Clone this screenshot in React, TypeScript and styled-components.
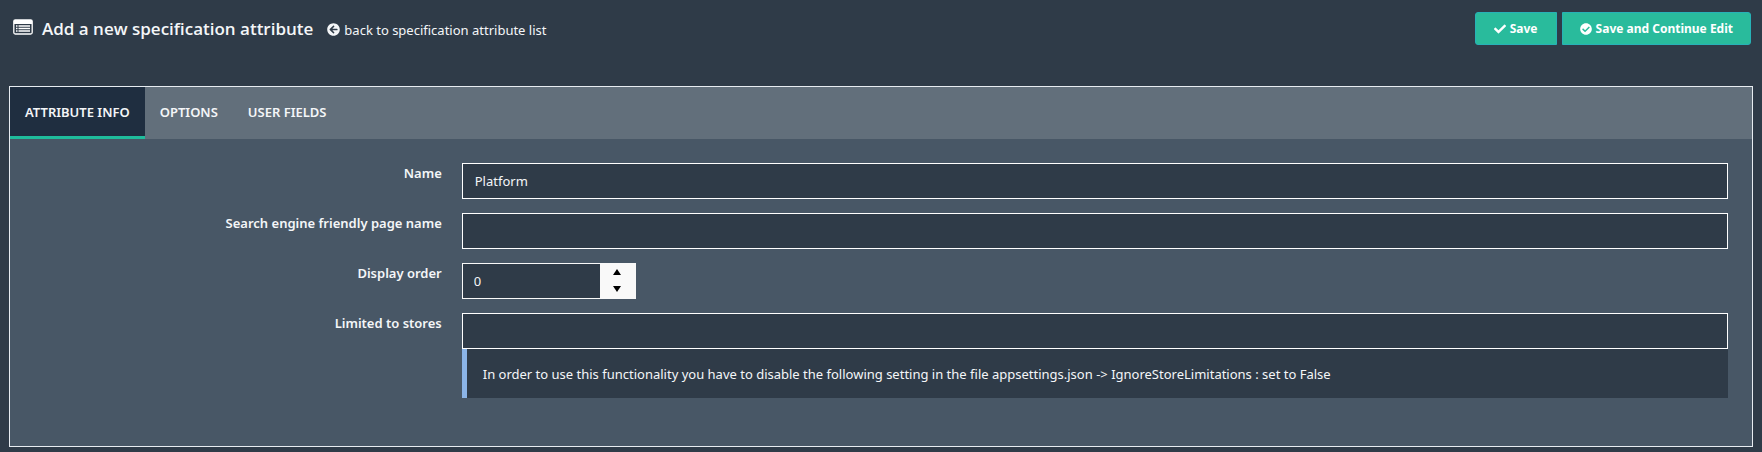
import React, { useState } from "react";
import styled, { createGlobalStyle } from "styled-components";
import { FaArrowCircleLeft, FaCheck, FaCheckCircle } from "react-icons/fa";

const GlobalStyle = createGlobalStyle`
  *, *::before, *::after { box-sizing: border-box; }
  body {
    margin: 0;
    background: #2f3b48;
    color: #f4f6f8;
    font-family: "Noto Sans", "Open Sans", sans-serif;
    font-size: 13px;
    line-height: 20px;
  }
  button, input { font: inherit; color: inherit; }
`;

const Page = styled.div`
  padding: 12px 9px 5px;
`;

const Header = styled.header`
  display: flex;
  align-items: flex-start;
  justify-content: space-between;
  height: 74px;
  padding: 0 2px 0 4px;
`;

const Heading = styled.div`
  display: flex;
  align-items: center;
  height: 33px;
`;

const Title = styled.h1`
  margin: 0 14px 0 9px;
  font-family: "Open Sans", "Noto Sans", sans-serif;
  font-size: 17px;
  font-weight: 600;
  line-height: 24px;
`;

const BackLink = styled.a`
  display: flex;
  align-items: center;
  gap: 4px;
  padding-top: 2px;
  color: inherit;
  text-decoration: none;
`;

const Actions = styled.div`
  display: flex;
  gap: 5px;
`;

const ActionButton = styled.button<{ $side: "left" | "right" }>`
  display: flex;
  align-items: center;
  justify-content: center;
  gap: 4px;
  min-width: 82px;
  height: 33px;
  padding: 0 17px;
  border: 1px solid #27b2b7;
  border-radius: ${(p) => (p.$side === "left" ? "3px 0 0 3px" : "0 3px 3px 0")};
  background: #29bb9c;
  color: #fff;
  font-size: 12px;
  font-weight: 700;
  cursor: pointer;
`;

const Panel = styled.main`
  border: 1px solid #e7ecf1;
  background: #485766;
`;

const Tabs = styled.div`
  display: flex;
  height: 52px;
  background: #626f7b;
`;

const Tab = styled.button<{ $active: boolean }>`
  padding: 0 15px;
  border: 0;
  border-bottom: 3px solid ${(p) => (p.$active ? "#1fbc9c" : "transparent")};
  background: ${(p) => (p.$active ? "#1f2e40" : "transparent")};
  font-weight: 600;
  text-transform: uppercase;
  cursor: pointer;
`;

const Form = styled.form`
  display: flex;
  flex-direction: column;
  gap: 14px;
  padding: 24px 14px 48px 13px;
`;

const Row = styled.div`
  display: grid;
  grid-template-columns: 1fr 3fr;
`;

const Label = styled.label`
  padding: 0 10px;
  font-weight: 600;
  text-align: right;
`;

const Field = styled.div`
  min-width: 0;
  padding: 0 10px;
`;

const TextInput = styled.input`
  display: block;
  width: 100%;
  height: 36px;
  padding: 0 12px;
  border: 1px solid #fff;
  border-radius: 0;
  background: #2f3b48;
  outline: none;
`;

const Numeric = styled.div`
  display: flex;
  width: 174px;
  height: 36px;
  border: 1px solid #f9f9f9;
`;

const NumericInput = styled.input`
  flex: 1;
  min-width: 0;
  padding: 0 11px;
  border: 0;
  background: #2f3b48;
  outline: none;
`;

const Spinner = styled.div`
  display: flex;
  flex-direction: column;
  width: 35px;
  padding-bottom: 1px;
  background: #f9f9f9;
`;

const SpinButton = styled.button`
  display: flex;
  flex: 1;
  align-items: center;
  justify-content: center;
  padding: 0;
  border: 0;
  background: transparent;
  cursor: pointer;
`;

const Note = styled.p`
  margin: 0;
  padding: 15px 16px 14px;
  border-left: 5px solid #8bb4e7;
  background: #2f3b48;
`;

const ListGlyph = styled.svg`
  flex: none;
  margin-bottom: 3px;
`;

const ListIcon = () => (
  <ListGlyph width="20" height="16" viewBox="0 0 20 16" aria-hidden="true">
    <rect x="0.8" y="0.8" width="18.4" height="14.2" rx="1.5" fill="none" stroke="#fff" strokeWidth="1.3" />
    <path d="M1 1h18v4H1z" fill="#fff" />
    <path d="M3 7h1.5M5.5 7H17M3 9.5h1.5M5.5 9.5H17M3 12h1.5M5.5 12H17" stroke="#fff" strokeWidth="1.3" />
  </ListGlyph>
);

const tabs = ["Attribute info", "Options", "User fields"];

export default function App() {
  const [active, setActive] = useState(0);
  const [name, setName] = useState("Platform");
  const [order, setOrder] = useState(0);

  return (
    <>
      <GlobalStyle />
      <Page>
        <Header>
          <Heading>
            <ListIcon />
            <Title>Add a new specification attribute</Title>
            <BackLink href="#list">
              <FaArrowCircleLeft size={13} />
              back to specification attribute list
            </BackLink>
          </Heading>
          <Actions>
            <ActionButton $side="left" type="submit" form="attribute-form">
              <FaCheck size={12} />
              Save
            </ActionButton>
            <ActionButton $side="right" type="submit" form="attribute-form">
              <FaCheckCircle size={12} />
              Save and Continue Edit
            </ActionButton>
          </Actions>
        </Header>
        <Panel>
          <Tabs role="tablist">
            {tabs.map((tab, i) => (
              <Tab key={tab} type="button" role="tab" aria-selected={i === active} $active={i === active} onClick={() => setActive(i)}>
                {tab}
              </Tab>
            ))}
          </Tabs>
          <Form id="attribute-form" onSubmit={(e) => e.preventDefault()}>
            <Row>
              <Label htmlFor="name">Name</Label>
              <Field>
                <TextInput id="name" value={name} onChange={(e) => setName(e.target.value)} />
              </Field>
            </Row>
            <Row>
              <Label htmlFor="se-name">Search engine friendly page name</Label>
              <Field>
                <TextInput id="se-name" />
              </Field>
            </Row>
            <Row>
              <Label htmlFor="order">Display order</Label>
              <Field>
                <Numeric>
                  <NumericInput id="order" inputMode="numeric" value={order} onChange={(e) => setOrder(Number(e.target.value) || 0)} />
                  <Spinner>
                    <SpinButton type="button" aria-label="Increase value" onClick={() => setOrder(order + 1)}>
                      <svg width="8" height="6" viewBox="0 0 8 6"><path d="M4 0L8 6H0z" fill="#000" /></svg>
                    </SpinButton>
                    <SpinButton type="button" aria-label="Decrease value" onClick={() => setOrder(order - 1)}>
                      <svg width="8" height="6" viewBox="0 0 8 6"><path d="M4 6L0 0h8z" fill="#000" /></svg>
                    </SpinButton>
                  </Spinner>
                </Numeric>
              </Field>
            </Row>
            <Row>
              <Label htmlFor="stores">Limited to stores</Label>
              <Field>
                <TextInput id="stores" />
                <Note>
                  In order to use this functionality you have to disable the following setting in the file appsettings.json -&gt; IgnoreStoreLimitations : set to False
                </Note>
              </Field>
            </Row>
          </Form>
        </Panel>
      </Page>
    </>
  );
}
